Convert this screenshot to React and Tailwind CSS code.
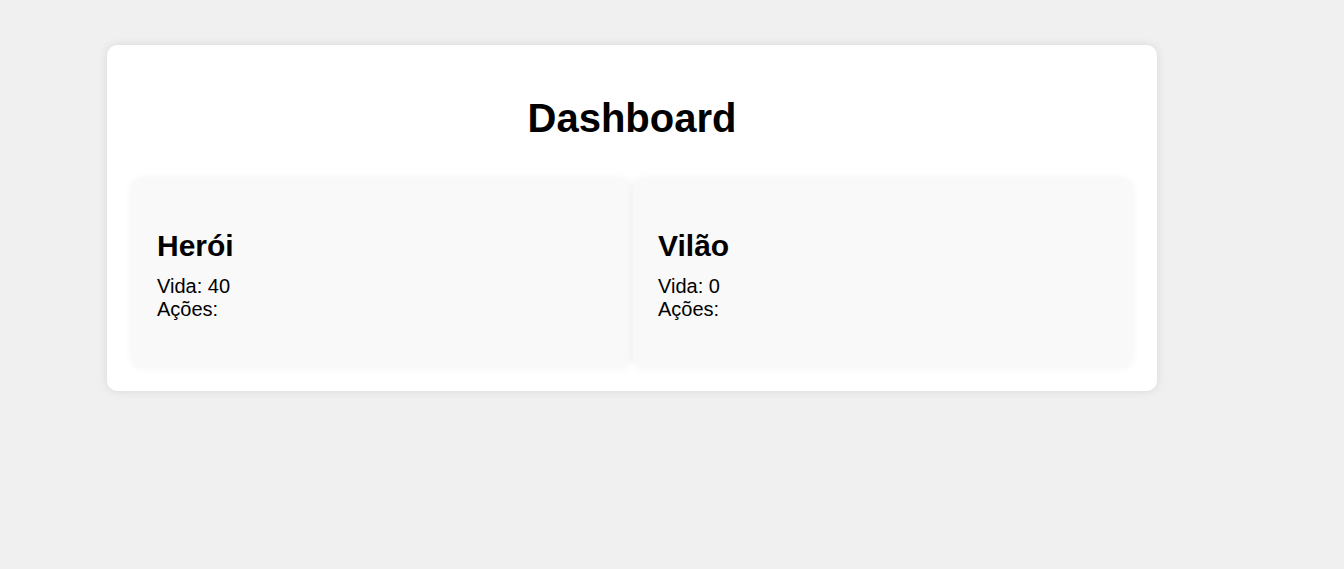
export default function App() {
  const panels = [
    { name: "Herói", vida: 40 },
    { name: "Vilão", vida: 0 },
  ];
  return (
    <div
      className="min-h-[569px] w-full bg-[#f0f0f0] pt-[45px] pl-[107px]"
      style={{ fontFamily: '"Liberation Sans", Arial, sans-serif' }}
    >
      <div className="w-[1050px] rounded-[10px] bg-white px-[25px] py-[24px] shadow-[0_0_10px_rgba(0,0,0,0.1)]">
        <h1 className="mt-[26px] mb-[38px] text-center text-[40px] leading-[46px] font-bold text-black">
          Dashboard
        </h1>
        <div className="flex gap-[2px]">
          {panels.map((p) => (
            <div
              key={p.name}
              className="w-[499px] rounded-[10px] bg-[#f9f9f9] pl-[25px] pr-[24px] pt-[24px] pb-[24px] shadow-[0_0_8px_rgba(0,0,0,0.06)]"
            >
              <h2 className="mt-[26px] mb-[12px] text-[30px] leading-[34px] font-bold text-black">
                {p.name}
              </h2>
              <div className="mb-[22px] text-[20px] leading-[23px] text-black">
                <p>Vida: {p.vida}</p>
                <p>Ações:</p>
              </div>
            </div>
          ))}
        </div>
      </div>
    </div>
  );
}
